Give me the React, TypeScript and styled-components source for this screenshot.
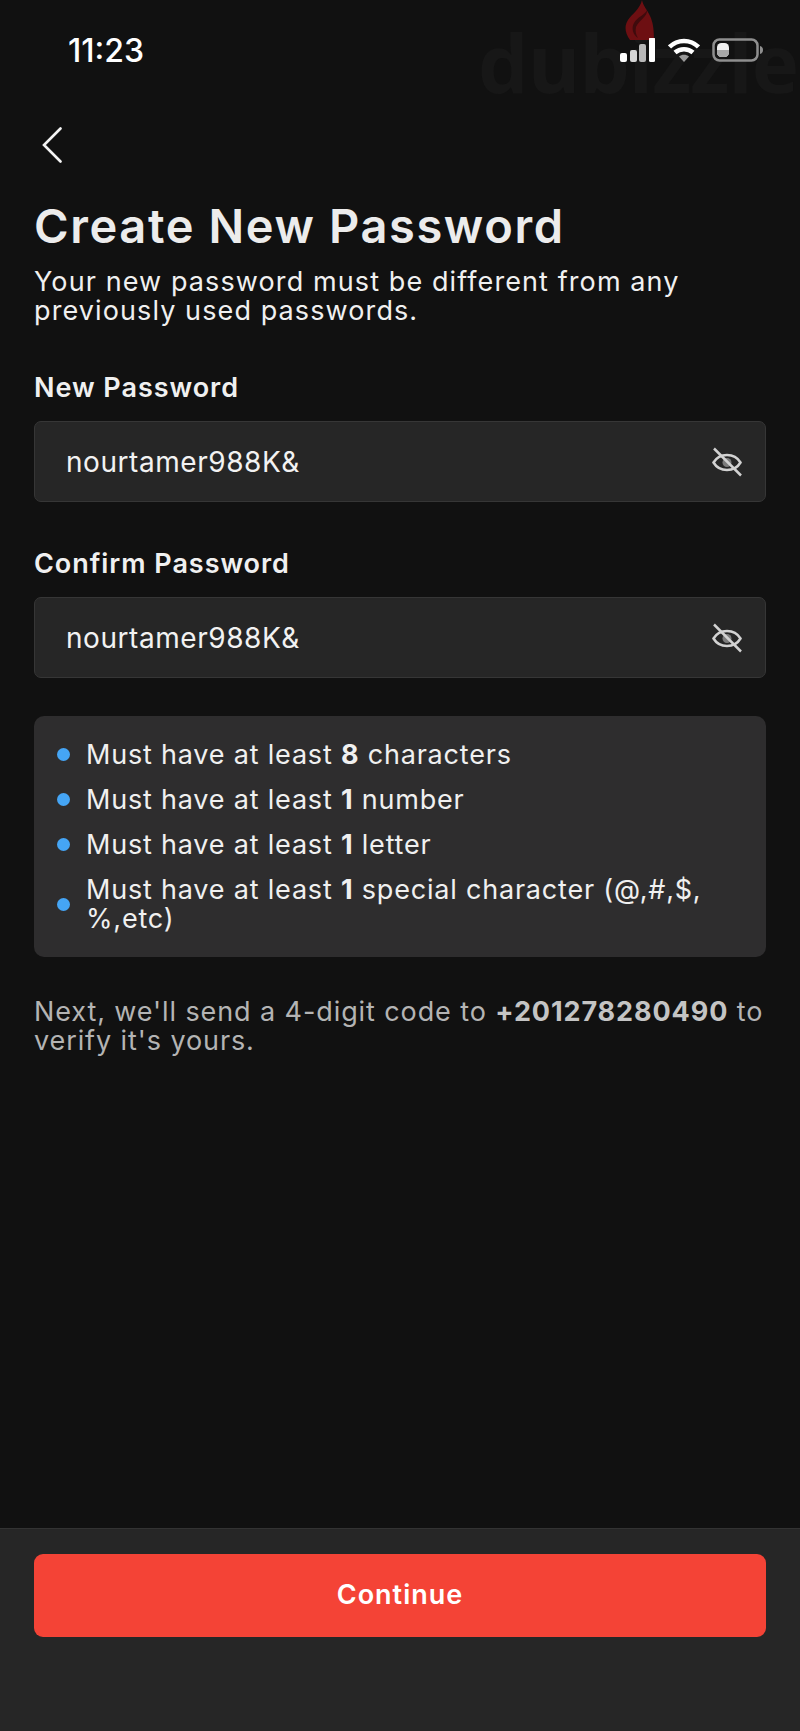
import { FC, ReactNode } from 'react'
import styled, { createGlobalStyle } from 'styled-components'

const GlobalStyle = createGlobalStyle`
   html, body {
      margin: 0;
      padding: 0;
      background: #111111;
   }
   * {
      box-sizing: border-box;
   }
`

const rules: { id: number; before: string; count: string; after: string }[] = [
   { id: 1, before: 'Must have at least ', count: '8', after: ' characters' },
   { id: 2, before: 'Must have at least ', count: '1', after: ' number' },
   { id: 3, before: 'Must have at least ', count: '1', after: ' letter' },
   { id: 4, before: 'Must have at least ', count: '1', after: ' special character (@,#,$, %,etc)' },
]

const SignalIcon = () => (
   <svg width="35" height="24" viewBox="0 0 35 24" fill="#fff">
      <rect x="0" y="15" width="7" height="9" rx="2" />
      <rect x="10" y="12" width="7" height="12" rx="2" fill="#d6d6d6" />
      <rect x="19" y="6" width="7" height="18" rx="2" fill="#b8b8b8" />
      <rect x="29" y="0" width="6" height="24" rx="1.500" />
   </svg>
)

const WifiIcon = () => (
   <svg width="32" height="24" viewBox="0 0 32 24" fill="none" stroke="#fff" strokeWidth="4.500">
      <path d="M1.500 9C9.500 .9 22.500 .9 30.500 9" />
      <path d="M7 14.500C12 10 20 10 25 14.500" />
      <path d="M11 18.500 16 24l5-5.500c-2.800-2.500-7.200-2.500-10 0z" fill="#9a9a9a" stroke="none" />
   </svg>
)

const BatteryIcon = () => (
   <svg width="51" height="24" viewBox="0 0 51 24" fill="none">
      <rect x="1.500" y="1.500" width="44" height="21" rx="6" stroke="#8f8f8f" strokeWidth="2.500" />
      <rect x="5" y="5" width="12" height="14" rx="4.500" fill="#f1f1f1" />
      <path d="M5 12h12v2.500a4.500 4.500 0 0 1-4.500 4.500h-3A4.500 4.500 0 0 1 5 14.500z" fill="#a8a8a8" />
      <path d="M48 8c2 .5 3 2 3 4s-1 3.500-3 4z" fill="#8f8f8f" />
   </svg>
)

const FlameIcon = () => (
   <svg width="30" height="46" viewBox="0 0 30 46">
      <path
         d="M17 0c1 6 5 9 8 16 3 6 4 14 4 24H5C0 33-1 26 3 20 7 14 15 9 17 0z"
         fill="#6d0f12"
      />
      <path d="M22 10c1 6-8 10-11 17-1 4 0 8 2 11-5-3-7-10-4-15 3-6 11-8 13-13z" fill="#3f0b0d" />
      <path d="M24 38h6v8h-6z" fill="#f2b9b9" />
   </svg>
)

const HiddenEyeIcon = () => (
   <svg width="30" height="30" viewBox="0 0 30 30" fill="none" stroke="#d2d2d2" strokeWidth="2.500">
      <path d="M1.500 15.500C4.500 10.500 9.500 8 15 8s10.500 2.500 13.500 7.500c-3 5-8 7.500-13.500 7.500S4.500 20.500 1.500 15.500z" />
      <circle cx="15" cy="15.500" r="4.500" fill="#7c7c7c" stroke="none" />
      <path d="M2 1.500l27 27" />
   </svg>
)

const BackIcon = () => (
   <svg width="20" height="36" viewBox="0 0 20 36" fill="none" stroke="#f4f4f4" strokeWidth="2.600" strokeLinecap="round">
      <path d="M18.500 1.500 2 18l16.500 16.500" />
   </svg>
)

const PasswordField: FC<{ label: string; value: string }> = ({ label, value }) => (
   <Field>
      <FieldLabel>{label}</FieldLabel>
      <InputBox>
         <InputValue>{value}</InputValue>
         <HiddenEyeIcon />
      </InputBox>
   </Field>
)

const Rule: FC<{ children: ReactNode }> = ({ children }) => (
   <RuleRow>
      <Dot />
      <RuleText>{children}</RuleText>
   </RuleRow>
)

export default function App() {
   return (
      <Page>
         <GlobalStyle />
         <Watermark>dubizzle</Watermark>
         <Flame>
            <FlameIcon />
         </Flame>

         <StatusBar>
            <Clock>11:23</Clock>
            <StatusIcons>
               <SignalIcon />
               <WifiIcon />
               <BatteryIcon />
            </StatusIcons>
         </StatusBar>

         <Main>
            <BackButton>
               <BackIcon />
            </BackButton>
            <Title>Create New Password</Title>
            <Subtitle>Your new password must be different from any previously used passwords.</Subtitle>

            <PasswordField label="New Password" value="nourtamer988K&" />
            <PasswordField label="Confirm Password" value="nourtamer988K&" />

            <RulesCard>
               {rules.map(rule => (
                  <Rule key={rule.id}>
                     {rule.before}
                     <Strong>{rule.count}</Strong>
                     {rule.after}
                  </Rule>
               ))}
            </RulesCard>

            <NextNote>
               Next, we'll send a 4-digit code to <NoteStrong>+201278280490</NoteStrong> to verify it's yours.
            </NextNote>
         </Main>

         <Footer>
            <ContinueButton>Continue</ContinueButton>
         </Footer>
      </Page>
   )
}

const Page = styled.div`
   position: relative;
   width: 800px;
   height: 1731px;
   display: flex;
   flex-direction: column;
   overflow: hidden;
   background: #111111;
   color: #f2f2f2;
   font-family: Inter, 'Open Sans', sans-serif;
`

const Watermark = styled.div`
   position: absolute;
   top: 12px;
   left: 478px;
   font-family: 'Open Sans', sans-serif;
   font-size: 80px;
   line-height: 100px;
   font-weight: 700;
   letter-spacing: -1px;
   color: #171717;
`

const Flame = styled.div`
   position: absolute;
   top: 0;
   left: 625px;
   line-height: 0;
`

const StatusBar = styled.div`
   position: relative;
   height: 102px;
   display: flex;
   align-items: flex-start;
   justify-content: space-between;
   padding: 32px 37px 0 68px;
`

const Clock = styled.div`
   font-size: 32px;
   line-height: 38px;
   font-weight: 500;
   color: #fff;
`

const StatusIcons = styled.div`
   display: flex;
   align-items: center;
   gap: 12.5px;
   padding-top: 6px;
`

const Main = styled.main`
   position: relative;
   flex: 1;
   padding: 0 34px;
`

const BackButton = styled.div`
   height: 96px;
   padding: 25px 0 0 8px;
   line-height: 0;
`

const Title = styled.h1`
   margin: 0;
   font-size: 47px;
   line-height: 56px;
   font-weight: 600;
   letter-spacing: 1.6px;
   color: #ececec;
`

const Subtitle = styled.p`
   margin: 13px 0 0;
   font-size: 27px;
   line-height: 29px;
   font-weight: 400;
   letter-spacing: 1.1px;
   color: #f0f0f0;
`

const Field = styled.div`
   margin-top: 47px;

   & + & {
      margin-top: 46px;
   }
`

const FieldLabel = styled.div`
   font-size: 27px;
   line-height: 32px;
   font-weight: 600;
   letter-spacing: 0.95px;
   color: #f0f0f0;
`

const InputBox = styled.div`
   margin-top: 17px;
   height: 81px;
   display: flex;
   align-items: center;
   justify-content: space-between;
   padding: 0 23px 0 31px;
   background: #262626;
   border: 1px solid #363636;
   border-radius: 7px;
`

const InputValue = styled.span`
   font-size: 28px;
   letter-spacing: 0.55px;
   color: #f2f2f2;
`

const RulesCard = styled.div`
   margin-top: 38px;
   padding: 24px 30px 24px 23px;
   display: flex;
   flex-direction: column;
   gap: 16px;
   background: #2e2d2e;
   border-radius: 10px;
`

const RuleRow = styled.div`
   display: flex;
   align-items: center;
   gap: 16px;
`

const Dot = styled.span`
   flex: none;
   width: 13px;
   height: 13px;
   border-radius: 50%;
   background: #45a5f5;
`

const RuleText = styled.div`
   font-size: 27px;
   line-height: 29px;
   letter-spacing: 0.8px;
   color: #f0f0f0;
`

const Strong = styled.b`
   font-weight: 700;
`

const NextNote = styled.p`
   margin: 40px 0 0;
   font-size: 27px;
   line-height: 29px;
   letter-spacing: 0.9px;
   color: #b4b4b4;
`

const NoteStrong = styled.b`
   font-weight: 700;
   color: #c4c4c4;
`

const Footer = styled.footer`
   position: relative;
   height: 203px;
   padding: 25px 34px 0;
   background: #262626;
   border-top: 1px solid #333333;
`

const ContinueButton = styled.button`
   width: 100%;
   height: 83px;
   padding: 0 0 3px;
   border: none;
   border-radius: 9px;
   background: #f44336;
   color: #fff;
   font-family: inherit;
   font-size: 27px;
   font-weight: 600;
   letter-spacing: 1px;
`
